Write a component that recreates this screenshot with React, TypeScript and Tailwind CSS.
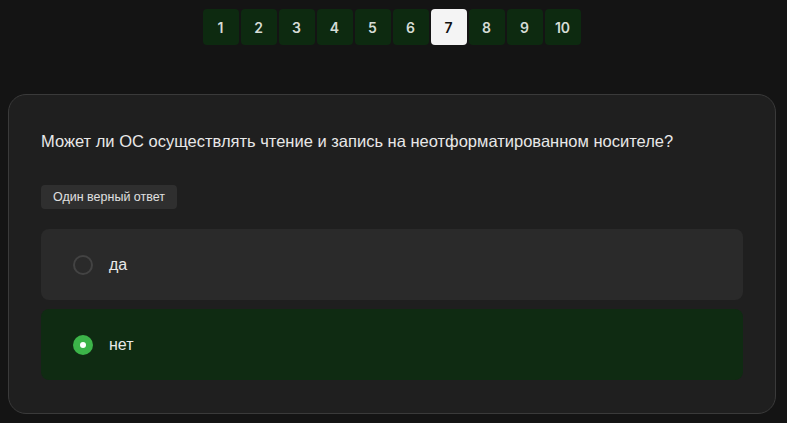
import { useState } from "react";

const pages = [1, 2, 3, 4, 5, 6, 7, 8, 9, 10];
const options = ["да", "нет"];

export default function App() {
  const [current, setCurrent] = useState(7);
  const [selected, setSelected] = useState(1);

  return (
    <div className="min-h-[423px] w-full bg-[#141414] pt-[9px] pb-[10px] font-['Liberation_Sans',Arial,sans-serif]">
      <div className="flex justify-center gap-[2px] pr-1">
        {pages.map((p) => (
          <button
            key={p}
            onClick={() => setCurrent(p)}
            className={
              p === current
                ? "flex h-9 w-9 items-center justify-center rounded-[4px] bg-[#f4f4f4] font-['Inter',sans-serif] text-[14px] font-semibold text-[#111]"
                : "flex h-9 w-9 items-center justify-center rounded-[4px] bg-[#0d2a10] font-['Inter',sans-serif] text-[14px] font-semibold text-[#d6dcd6]"
            }
          >
            {p}
          </button>
        ))}
      </div>

      <div className="mt-[49px] ml-2 mr-[11px] rounded-[18px] border border-[#3a3a3a] bg-[#1f1f1f] px-8 pt-[34px] pb-[33px]">
        <p className="text-[16.5px] leading-[24px] text-[#e8e8e8]">
          Может ли ОС осуществлять чтение и запись на неотформатированном носителе?
        </p>

        <span className="mt-[32px] inline-block rounded-[4px] bg-[#2f2f2f] px-3 py-[4px] text-[12.5px] leading-[16px] text-[#e0e0e0]">
          Один верный ответ
        </span>

        <div className="mt-5 flex flex-col gap-[9px]">
          {options.map((o, i) => (
            <button
              key={o}
              onClick={() => setSelected(i)}
              className={
                i === selected
                  ? "flex h-[71px] items-center gap-4 rounded-[8px] bg-[#0f2b12] px-8 text-left"
                  : "flex h-[71px] items-center gap-4 rounded-[8px] bg-[#2a2a2a] px-8 text-left"
              }
            >
              {i === selected ? (
                <span className="flex h-5 w-5 items-center justify-center rounded-full bg-[#3cb449]">
                  <span className="h-[6px] w-[6px] rounded-full bg-white" />
                </span>
              ) : (
                <span className="h-5 w-5 rounded-full border-2 border-[#434343]" />
              )}
              <span className="text-[16px] text-[#e8e8e8]">{o}</span>
            </button>
          ))}
        </div>
      </div>
    </div>
  );
}
